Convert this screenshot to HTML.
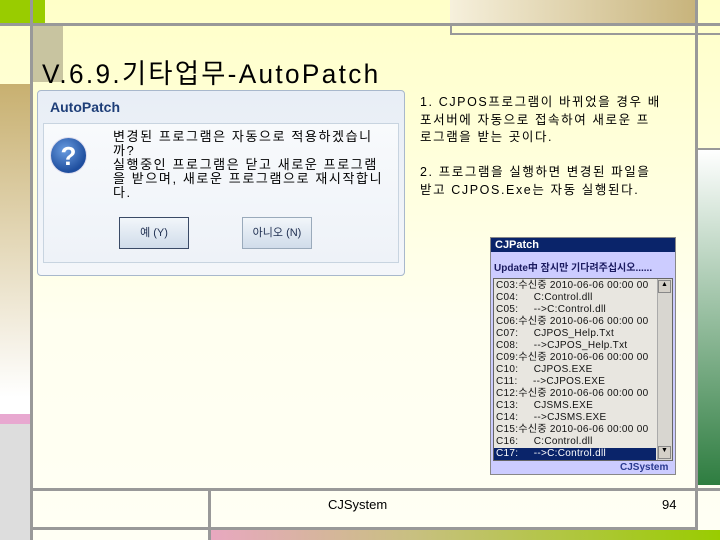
<!DOCTYPE html>
<html><head><meta charset="utf-8"><style>
body{margin:0;width:720px;height:540px;position:relative;overflow:hidden;font-family:"Liberation Sans","Noto Sans CJK KR",sans-serif;background:linear-gradient(#FFFFC8,#FFFFF0 60%,#FFFFF4);}
div{position:absolute;box-sizing:border-box}
.mono{font-size:10px;line-height:12px;white-space:pre;color:#111;letter-spacing:0.3px}
</style></head><body>
<div style="left:0;top:0;width:45px;height:24px;background:#99CC00"></div>
<div style="left:450px;top:0;width:245px;height:24px;background:linear-gradient(90deg,#F6F0DC,#C8B47C)"></div>
<div style="left:0;top:23px;width:720px;height:3px;background:#999"></div>
<div style="left:450px;top:33px;width:270px;height:2px;background:#999"></div>
<div style="left:450px;top:24px;width:2px;height:11px;background:#999"></div>
<div style="left:33px;top:26px;width:30px;height:56px;background:#C8C4A0"></div>
<div style="left:0;top:84px;width:30px;height:330px;background:linear-gradient(#C8B070,#FFFFFF 95%)"></div>
<div style="left:0;top:414px;width:30px;height:10px;background:#E8A8D0"></div>
<div style="left:0;top:424px;width:30px;height:116px;background:#DDD"></div>
<div style="left:30px;top:0;width:3px;height:540px;background:#999"></div>
<div style="left:695px;top:0;width:3px;height:530px;background:#999"></div>
<div style="left:698px;top:150px;width:22px;height:335px;background:linear-gradient(#FFFFFF,#2E7D40)"></div>
<div style="left:698px;top:148px;width:22px;height:2px;background:#999"></div>
<div style="left:33px;top:488px;width:687px;height:3px;background:#999"></div>
<div style="left:208px;top:491px;width:3px;height:49px;background:#999"></div>
<div style="left:33px;top:527px;width:662px;height:3px;background:#999"></div>
<div style="left:211px;top:530px;width:509px;height:10px;background:linear-gradient(90deg,#E8A8C0,#C8C080 40%,#99CC00)"></div>
<div style="left:42px;top:52px;font-size:27px;color:#000;white-space:nowrap;letter-spacing:2.4px;transform:scaleX(0.97);transform-origin:left">V.6.9.기타업무-AutoPatch</div>
<div style="left:37px;top:90px;width:368px;height:186px;border:1px solid #A8B8CC;border-radius:4px;background:linear-gradient(#E8EEF6,#F4F6FA)"></div>
<div style="left:50px;top:99px;font-size:14px;font-weight:bold;color:#1E3E78">AutoPatch</div>
<div style="left:43px;top:123px;width:356px;height:140px;border:1px solid #C8D4E0;background:linear-gradient(#F8FAFC,#EEF2F8)"></div>
<div style="left:50px;top:137px;width:37px;height:37px;border-radius:50%;background:radial-gradient(circle at 40% 35%,#6A9CE0,#1E4E9E 70%);border:1px solid #DDE;color:#fff;font-weight:bold;font-size:26px;text-align:center;line-height:36px">?</div>
<div style="left:113px;top:130px;font-size:13px;line-height:14px;color:#000;white-space:nowrap;letter-spacing:1.6px">변경된 프로그램은 자동으로 적용하겠습니<br>까?<br>실행중인 프로그램은 닫고 새로운 프로그램<br>을 받으며, 새로운 프로그램으로 재시작합니<br>다.</div>
<div style="left:119px;top:217px;width:70px;height:32px;border:1px solid #3A4A66;background:linear-gradient(#F2F6FA,#D0DCEA);font-size:11px;text-align:center;line-height:30px;color:#1E2E50">예 (Y)</div>
<div style="left:242px;top:217px;width:70px;height:32px;border:1px solid #9AAABB;background:linear-gradient(#F2F6FA,#D0DCEA);font-size:11px;text-align:center;line-height:30px;color:#1E2E50">아니오 (N)</div>
<div style="left:420px;top:94px;font-size:12.5px;line-height:17.5px;color:#000;letter-spacing:1.6px;white-space:nowrap">1. CJPOS프로그램이 바뀌었을 경우 배<br>포서버에 자동으로 접속하여 새로운 프<br>로그램을 받는 곳이다.<br><br>2. 프로그램을 실행하면 변경된 파일을<br>받고 CJPOS.Exe는 자동 실행된다.</div>
<div style="left:490px;top:237px;width:186px;height:238px;background:#CCCCFF;border:1px solid #888"></div>
<div style="left:491px;top:238px;width:184px;height:14px;background:#0A246A;color:#fff;font-size:11px;font-weight:bold;line-height:14px;padding-left:4px">CJPatch</div>
<div style="left:494px;top:259px;font-size:10px;font-weight:bold;color:#1A1A60;white-space:nowrap">Update中 잠시만 기다려주십시오......</div>
<div style="left:493px;top:278px;width:180px;height:183px;background:#E8E6E0;border:1px solid #666"></div>
<div style="left:657px;top:279px;width:15px;height:181px;background:#D8D6D0;border-left:1px solid #aaa"></div>
<div style="left:658px;top:280px;width:13px;height:13px;background:#D4D0C8;border:1px solid #888;font-size:7px;text-align:center">▲</div>
<div style="left:658px;top:446px;width:13px;height:13px;background:#D4D0C8;border:1px solid #888;font-size:7px;text-align:center">▼</div>
<div style="left:494px;top:448px;width:162px;height:12px;background:#0A246A"></div>
<div class="mono" style="left:496px;top:280px">C03:수신중 2010-06-06 00:00 00
C04:     C:Control.dll
C05:     -->C:Control.dll
C06:수신중 2010-06-06 00:00 00
C07:     CJPOS_Help.Txt
C08:     -->CJPOS_Help.Txt
C09:수신중 2010-06-06 00:00 00
C10:     CJPOS.EXE
C11:     -->CJPOS.EXE
C12:수신중 2010-06-06 00:00 00
C13:     CJSMS.EXE
C14:     -->CJSMS.EXE
C15:수신중 2010-06-06 00:00 00
C16:     C:Control.dll
<span style="color:#fff">C17:     -->C:Control.dll</span></div>
<div style="left:620px;top:462px;font-size:10px;font-weight:bold;color:#2A3A90">CJSystem</div>
<div style="left:328px;top:497px;font-size:13px;color:#000">CJSystem</div>
<div style="left:662px;top:497px;font-size:13px;color:#000">94</div>
</body></html>
